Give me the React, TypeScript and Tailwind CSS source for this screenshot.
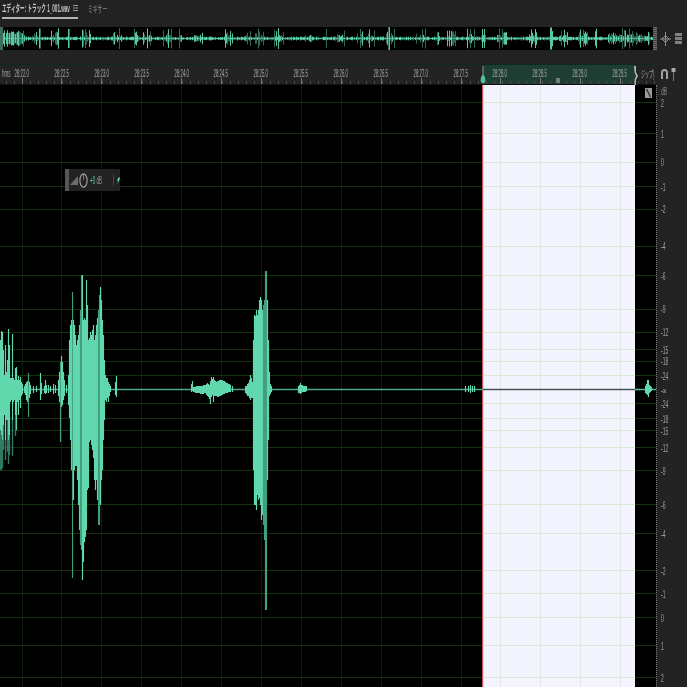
import React from "react";

type Col = [number, number, number, number?];

const burst: Col[] = [
  [0,340,470],[1,331,470],[2,332,468],[3,350,450],[4,375,415],[5,345,460],[6,372,420],[7,360,452],[8,329,464],[9,345,455],[10,378,402],[11,378,400],[12,334,456],[13,378,402],[14,380,400],[15,368,436],[16,367,430],[17,380,402],[18,376,415],[19,380,400],[20,377,408],[21,382,396],[22,384,394],
  [24,386,393],[25,384,395],[26,382,400],[27,381,402],[28,373,417,1],[29,382,398],[30,385,394],[33,386,393],[36,386,392],[40,373,400],[41,383,394],[44,386,393],[45,380,394],[46,385,393],[48,385,393],[50,386,392],[53,384,394],[55,385,393],
  [58,380,396],[59,372,402],[60,362,442,1],[61,356,407],[62,362,405],[63,372,400],[64,380,396],[66,385,393],
  [68,375,405],[69,340,418],[70,325,440],[71,320,470],[72,292,578,1],[73,320,500],[74,325,470],[75,335,466],[76,345,466],[77,340,480],[78,335,505],[79,325,530],[80,310,545,1],[81,275,550,1],[82,275,580],[83,320,562],[84,318,542],[85,320,537],[86,280,530],[87,305,490],[88,340,488],[89,338,442],[90,332,440],[91,335,445],[92,330,450],[93,325,458],[94,340,480],[95,335,490],[96,325,480],[97,318,500],[98,310,525,1],[99,295,525,1],[100,287,505],[101,300,480],[102,320,470],[103,335,440],[104,360,420],[105,375,400],[106,378,402],[107,378,398],[108,382,402],[109,384,396],[110,386,392],[115,382,395],[116,376,397],
  [245,386,393],[246,386,394],[247,384,396],[248,383,396],[249,380,398],[250,375,400],[251,378,398],[252,382,398],[253,340,470],[254,315,505],[255,316,505],[256,310,510],[257,315,495],[258,310,500],[259,300,498],[260,297,505],[261,300,520],[262,310,515],[263,305,525,1],[264,300,540,1],[265,271,610,1],[266,271,610,1],[267,300,480],[268,340,440],[269,372,396],[270,384,394],[271,386,392],
  [191,384,392],[192,381,391],[193,387,392],[194,387,392],[195,387,393],[196,386,393],[197,386,393],[198,386,393],[199,386,393],[200,386,394],[201,386,394],[202,386,394],[203,385,394],[204,385,393],[205,385,393],[206,384,395],[207,383,396],[208,384,397],[209,385,399],[210,381,404],[211,377,397],[212,379,395],[213,377,402],[214,380,396],[215,381,396],[216,382,396],[217,381,397],[218,381,397],[219,380,396],[220,380,396],[221,380,395],[222,380,395],[223,381,394],[224,381,394],[225,382,393],[226,383,393],[227,383,393],[228,384,392],[229,384,392],[230,385,392],[232,386,392],
  [298,386,393],[299,385,393],[300,383,394],[301,385,393],[302,385,392],[303,386,392],[304,386,392],[305,386,392],[306,386,391],[465,386,392],[468,386,392],[470,385,393],[472,386,392],[474,386,392],
  [645,386,393],[646,384,394],[647,380,395],[648,380,397],[649,385,393],[650,386,392],[651,387,391],
];

const darkTails = [[0,430,470],[1,435,470],[2,440,468],[3,425,450],[5,440,460],[7,420,452],[8,440,464],[9,435,455],[12,420,456],[15,415,436]];

const hGrid = [102,133,162,186,209,246,275,309,332,349,361,375,403,418,430,447,470,504,533,570,593,617,645,677];
const vGrid = [22,61,101,141,181,221,261,301,341,381,421,461,500,540,580,620];

const labels = ["28:22.0","28:22.5","28:23.0","28:23.5","28:24.0","28:24.5","28:25.0","28:25.5","28:26.0","28:26.5","28:27.0","28:27.5","28:28.0","28:28.5","28:29.0","28:29.5"];

const axis: [number,string][] = [
  [104,"2"],[135,"1"],[163,"0"],[188,"-1"],[210,"-2"],[247,"-4"],[277,"-6"],[310,"-9"],[333,"-12"],[351,"-15"],[362,"-18"],[377,"-24"],[391,"-∞"],[405,"-24"],[420,"-18"],[432,"-15"],[449,"-12"],[472,"-9"],[506,"-6"],[535,"-4"],[572,"-2"],[595,"-1"],[619,"0"],[647,"1"],[679,"2"],
];

function rng(seed: number) {
  let s = seed;
  return () => {
    s = (s * 16807) % 2147483647;
    return s / 2147483647;
  };
}

const overview = (() => {
  const r = rng(4711);
  const out: { x: number; h: number; o: number }[] = [];
  for (let x = 3; x < 653; x++) {
    const group = Math.sin(x * 0.31) * Math.sin(x * 0.083 + 1) > 0.08;
    let h = 0.8 + r() * 1.2;
    if (group) {
      const q = r();
      h = 1.5 + q * q * 9;
    }
    if (x >= 8 && x < 24) h = 4 + r() * 5;
    if (x >= 608 && x < 650) h = 2 + r() * r() * 11;
    if (x >= 550 && x < 552) h = 11;
    if (x === 388 || x === 389) h = 12;
    if (x === 39 || x === 40) h = 10;
    out.push({ x, h, o: r() > 0.45 ? 0.95 : 0.5 });
  }
  return out;
})();

function Main() {
  return (
    <svg width="656" height="602" viewBox="0 85 656 602" className="block">
      <rect x="0" y="85" width="656" height="602" fill="#000" />
      <rect x="483" y="85" width="152" height="602" fill="#f3f4fe" />
      <rect x="482" y="85" width="1.2" height="602" fill="#c9545c" />
      {vGrid.map((x) => (
        <line key={x} x1={x + 0.5} x2={x + 0.5} y1="85" y2="687" stroke={x > 483 ? "#e4e8e4" : "#0b1f08"} />
      ))}
      {hGrid.map((y) => (
        <g key={y}>
          <line x1="0" x2="482" y1={y + 0.5} y2={y + 0.5} stroke="#17300e" />
          <line x1="483" x2="635" y1={y + 0.5} y2={y + 0.5} stroke="#dbe9d8" />
          <line x1="635" x2="656" y1={y + 0.5} y2={y + 0.5} stroke="#17300e" />
        </g>
      ))}
      <line x1="0" x2="483" y1="389.5" y2="389.5" stroke="#4da88a" strokeWidth="1.4" />
      <line x1="483" x2="640" y1="389.5" y2="389.5" stroke="#4a4f52" strokeWidth="1.4" />
      <line x1="635" x2="656" y1="389.5" y2="389.5" stroke="#4fc09c" strokeWidth="1.4" />
      {burst.map(([x, t, b, d]) => (
        <line key={x} x1={x + 0.5} x2={x + 0.5} y1={t} y2={b} stroke={d ? "#3f9f80" : "#62d8ae"} strokeWidth="1.15" />
      ))}
      {darkTails.map(([x, t, b]) => (
        <line key={x} x1={x + 0.5} x2={x + 0.5} y1={t} y2={b} stroke="#2f7c63" strokeWidth="1.15" />
      ))}
    </svg>
  );
}

function Overview() {
  return (
    <svg width="653" height="23" viewBox="0 27 653 23" className="block bg-black">
      <line x1="0" x2="653" y1="38.5" y2="38.5" stroke="#3f9a7e" />
      {overview.map(({ x, h, o }) => (
        <line key={x} x1={x + 0.5} x2={x + 0.5} y1={38.5 - h} y2={38.5 + h} stroke="#5cd3a9" strokeOpacity={o} />
      ))}
      <rect x="0" y="27" width="3" height="23" fill="#3f6b5a" />
    </svg>
  );
}

function RulerBack() {
  const ticks: number[] = [];
  for (let x = 6; x < 655; x += 8) ticks.push(x);
  return (
    <svg width="656" height="21" viewBox="0 64 656 21" className="absolute left-0 top-0">
      <rect x="0" y="64" width="656" height="21" fill="#232323" />
      <rect x="483" y="65" width="152" height="20" fill="#1f3e33" />
      <line x1="0" x2="656" y1="64.5" y2="64.5" stroke="#0f2a1c" />
      <line x1="0" x2="656" y1="84.5" y2="84.5" stroke="#111" />
      {ticks.map((x) => (
        <line key={x} x1={x + 0.5} x2={x + 0.5} y1="81" y2="84" stroke="#4e4e4e" />
      ))}
      {vGrid.map((x) => (
        <line key={x} x1={x + 0.5} x2={x + 0.5} y1="78" y2="84" stroke="#757575" />
      ))}
      <line x1="483" x2="483" y1="66" y2="76" stroke="#8f9a96" />
      <path d="M481 77 Q483 73 485 77 L485.5 81 Q483 86 480.5 81 Z" fill="#4fc09c" />
      <path d="M634 66 L636 66 L636 72 L638 76 L636 80 L636 85 L634.5 85 L634.5 80 L636 76 L634.5 72 Z" fill="#b5b5b5" />
      <rect x="556" y="78" width="4" height="5" fill="#6f7f79" />
    </svg>
  );
}

export default function App() {
  const font = { fontFamily: '"Liberation Sans", "Noto Sans CJK JP", sans-serif' };
  return (
    <div style={font} className="relative flex h-[687px] w-[687px] flex-col overflow-hidden bg-[#222222] text-[#a8a8a8]">
      {/* tabs */}
      <div className="flex h-[27px] shrink-0 items-start">
        <div className="ml-[2px] flex h-[18.5px] w-[76px] items-center justify-between border-b-2 border-[#b4b4b4] blur-[0.3px]">
          <span className="w-[68px] origin-left scale-x-[0.46] whitespace-nowrap text-[10px] font-bold text-[#c4c4c4]">エディター: トラック 1_001.wav</span>
          <svg width="5" height="6">
            <path d="M0 .5h5M0 3h5M0 5.5h5" stroke="#999" />
          </svg>
        </div>
        <div className="ml-[10px] flex h-[18px] w-[19px] items-center blur-[0.3px]">
          <span className="origin-left scale-x-[0.48] whitespace-nowrap text-[10px] text-[#8a8a8a]">ミキサー</span>
        </div>
      </div>

      {/* overview */}
      <div className="flex h-[23px] shrink-0">
        <Overview />
        <div className="h-[23px] w-[4px] bg-[repeating-linear-gradient(0deg,#6a6a6a_0,#6a6a6a_1px,#454545_1px,#454545_2px)]" />
        <div className="flex flex-1 items-center gap-[4px] pl-[3px]">
          <svg width="11" height="14" viewBox="0 0 11 14" fill="none" stroke="#8f8f8f" strokeWidth="1">
            <path d="M5.5 0v14M2 7l3.5-3.5L9 7l-3.5 3.5z" />
            <path d="M0 7h11" />
          </svg>
          <svg width="7" height="11" viewBox="0 0 7 11">
            <rect width="7" height="11" fill="#808080" />
            <path d="M0 3.5h7M0 7.5h7" stroke="#2a2a2a" />
          </svg>
        </div>
      </div>

      <div className="h-[14px] shrink-0" />

      {/* ruler */}
      <div className="flex h-[21px] shrink-0">
        <div className="relative h-[21px] w-[656px] shrink-0">
          <RulerBack />
          <div className="relative flex h-[18px] items-center pl-[2px] blur-[0.3px]">
            <span className="w-[8px] origin-left scale-x-[0.45] whitespace-nowrap text-[10px] text-[#a0a0a0]">hms</span>
            <div className="-ml-[8px] flex">
              {labels.map((l) => (
                <span key={l} className="flex w-[39.85px] justify-center">
                  <span className="scale-x-[0.43] whitespace-nowrap text-[10px] text-[#a8a8a8]">{l}</span>
                </span>
              ))}
            </div>
          </div>
          <span className="absolute left-[641px] top-[3px] origin-left scale-x-[0.4] whitespace-nowrap text-[10px] text-[#a0a0a0] blur-[0.3px]">ジップ)</span>
        </div>
        <div className="flex flex-1 items-start gap-[3px] pl-[5px] pt-[4px]">
          <svg width="7" height="10" viewBox="0 0 7 10" fill="none" className="mt-[1px]">
            <path d="M1 10V3.5a2.5 2.5 0 0 1 5 0V10" stroke="#a0a0a0" strokeWidth="2" />
          </svg>
          <svg width="5" height="13" viewBox="0 0 5 13">
            <rect x="0.5" width="4" height="4" fill="#a8a8a8" />
            <rect x="2" y="4" width="1" height="9" fill="#7a7a7a" />
          </svg>
        </div>
      </div>

      {/* main */}
      <div className="flex min-h-0 flex-1">
        <div className="relative h-[602px] w-[656px] shrink-0">
          <Main />
          <div className="absolute left-[65px] top-[84px] flex h-[22px] w-[55px] items-center bg-[#222222]">
            <div className="h-full w-[4px] bg-[#555555]" />
            <svg width="8" height="9" viewBox="0 0 8 9" className="ml-[1px]">
              <path d="M0 9L8 0v9z" fill="#6e6e6e" />
            </svg>
            <svg width="9" height="15" viewBox="0 0 9 15" className="ml-[1px]" fill="none">
              <ellipse cx="4.5" cy="7.5" rx="3.6" ry="6.6" stroke="#a8a8a8" strokeWidth="1.1" />
              <path d="M4.5 2v5" stroke="#777" />
            </svg>
            <span className="ml-[2px] w-[12px] origin-left scale-x-[0.45] whitespace-nowrap text-[10px] text-[#9a9a9a] blur-[0.3px]">
              <span className="text-[#5fd3a9]">+0</span> dB
            </span>
            <div className="ml-[11px] h-[12px] w-[1px] bg-[#444444]" />
            <svg width="4" height="7" viewBox="0 0 4 7" className="ml-[2px]">
              <path d="M1 7l1-3-1-1 2-3 1 1-1 3z" fill="#5fd3a9" />
            </svg>
          </div>
          <svg width="7" height="10" viewBox="0 0 7 10" className="absolute left-[645px] top-[3px]">
            <rect width="7" height="10" fill="#9a9a9a" />
            <path d="M1.5 1L5.5 9" stroke="#333" strokeWidth="1.4" />
          </svg>
        </div>

        {/* axis */}
        <div className="relative flex-1 border-l border-dotted border-[#777] bg-[#232323] blur-[0.25px]">
          <span className="absolute left-[4px] top-[2px] origin-left scale-x-[0.5] text-[10px] leading-[10px] text-[#8a8a8a]">dB</span>
          {axis.map(([y, t]) => (
            <span
              key={y}
              style={{ top: y - 85 - 6 }}
              className="absolute left-[4px] origin-left scale-x-[0.5] whitespace-nowrap text-[10px] leading-[12px] text-[#a0a0a0]"
            >
              {t}
            </span>
          ))}
        </div>
      </div>
    </div>
  );
}
